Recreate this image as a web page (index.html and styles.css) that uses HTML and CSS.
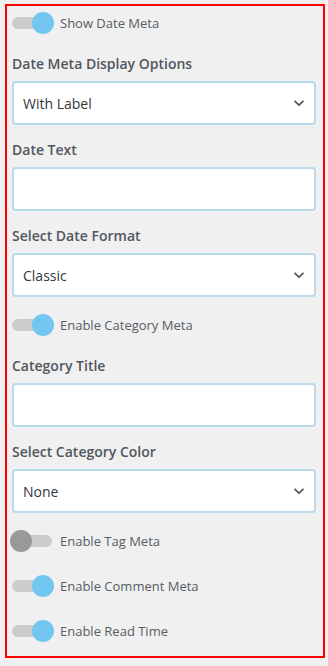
FILE: index.html
```html
<!doctype html>
<html>
    <head>
        <meta name="viewport" content="width=device-width, initial-scale=1.0">
        <title>Post Meta Settings</title>
        <link rel="stylesheet" href="styles.css">
    </head>
    <body>
        <div class="panel">
            <label class="toggle-row">
                <span class="toggle on"><span class="knob"></span></span>
                <span class="toggle-label">Show Date Meta</span>
            </label>

            <div class="field-label">Date Meta Display Options</div>
            <div class="select">
                <span>With Label</span>
                <svg class="chevron" width="12" height="8" viewBox="0 0 12 8"><path d="M1.5 1.8 L6 6 L10.5 1.8" fill="none" stroke="#555" stroke-width="1.7"/></svg>
            </div>

            <div class="field-label">Date Text</div>
            <input class="text-input" type="text">

            <div class="field-label">Select Date Format</div>
            <div class="select">
                <span>Classic</span>
                <svg class="chevron" width="12" height="8" viewBox="0 0 12 8"><path d="M1.5 1.8 L6 6 L10.5 1.8" fill="none" stroke="#555" stroke-width="1.7"/></svg>
            </div>

            <label class="toggle-row">
                <span class="toggle on"><span class="knob"></span></span>
                <span class="toggle-label">Enable Category Meta</span>
            </label>

            <div class="field-label">Category Title</div>
            <input class="text-input" type="text">

            <div class="field-label">Select Category Color</div>
            <div class="select">
                <span>None</span>
                <svg class="chevron" width="12" height="8" viewBox="0 0 12 8"><path d="M1.5 1.8 L6 6 L10.5 1.8" fill="none" stroke="#555" stroke-width="1.7"/></svg>
            </div>

            <label class="toggle-row">
                <span class="toggle"><span class="knob"></span></span>
                <span class="toggle-label">Enable Tag Meta</span>
            </label>

            <label class="toggle-row">
                <span class="toggle on"><span class="knob"></span></span>
                <span class="toggle-label">Enable Comment Meta</span>
            </label>

            <label class="toggle-row">
                <span class="toggle on"><span class="knob"></span></span>
                <span class="toggle-label">Enable Read Time</span>
            </label>
        </div>
    </body>
</html>
```

FILE: styles.css
```css
body {
    font-family: "Open Sans", "Noto Sans", sans-serif;
    background-color: #f0f0f0;
    color: #50575e;
    margin: 0;
    padding: 0;
}

.panel {
    width: 320px;
    height: 654px;
    box-sizing: border-box;
    margin: 4px 0 0 5px;
    border: 2px solid #ff0000;
    padding: 6px 7px 0 5px;
}

.toggle-row {
    display: flex;
    align-items: center;
    height: 22px;
    margin-bottom: 20px;
    cursor: pointer;
}

.select + .toggle-row,
.text-input + .toggle-row {
    margin-top: 17px;
}

.toggle-row + .toggle-row {
    margin-top: 23px;
}

.toggle {
    position: relative;
    width: 40px;
    height: 12px;
    border-radius: 6px;
    background-color: #cccccc;
    flex-shrink: 0;
}

.knob {
    position: absolute;
    top: -5px;
    left: -2px;
    width: 22px;
    height: 22px;
    border-radius: 50%;
    background-color: #999999;
}

.toggle.on .knob {
    left: auto;
    right: -2px;
    background-color: #72c6f0;
}

.toggle-label {
    margin-left: 8px;
    font-size: 13px;
    color: #555d66;
}

.field-label {
    font-size: 14px;
    font-weight: 600;
    line-height: 20px;
    margin-bottom: 7px;
    color: #50575e;
}

.select,
.text-input {
    display: flex;
    align-items: center;
    justify-content: space-between;
    width: 304px;
    height: 44px;
    box-sizing: border-box;
    margin: 0 0 15px 0;
    padding: 0 9px 0 9px;
    background-color: #fff;
    border: 2px solid #b8daec;
    border-radius: 4px;
    font-family: inherit;
    font-size: 14px;
    color: #32373c;
}

.chevron {
    display: block;
}
```
